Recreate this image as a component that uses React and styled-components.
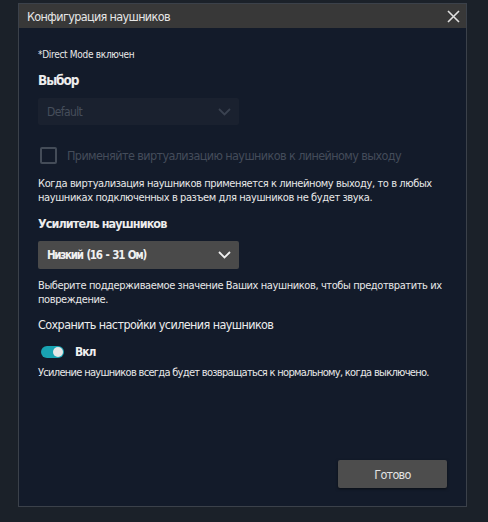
import styled, { createGlobalStyle } from "styled-components";

const GlobalStyle = createGlobalStyle`
  body {
    margin: 0;
    background: #1b2129;
    font-family: "DejaVu Sans Condensed", "Liberation Sans", sans-serif;
  }
`

const Dialog = styled.div`
  box-sizing: border-box;
  width: 449px;
  height: 504px;
  margin: 3px 0 0 18px;
  border: 1px solid #3b414a;
  background: #131b2a;
  display: flex;
  flex-direction: column;
`

const Header = styled.div`
  height: 24px;
  background: #383838;
  display: flex;
  align-items: center;
  justify-content: space-between;
  padding: 0 5px 0 8px;
  color: #e6e6e6;
  font-size: 12.5px;
  letter-spacing: -0.65px;
`

const Close = styled.button`
  background: none;
  border: none;
  padding: 0;
  width: 16px;
  height: 16px;
  display: flex;
  align-items: center;
  justify-content: center;
  cursor: pointer;
`

const Body = styled.div`
  flex: 1;
  display: flex;
  flex-direction: column;
  padding: 0 19px 18px 19px;
`

const Note = styled.div`
  margin-top: ${(p) => p.mt}px;
  margin-right: -10px;
  font-size: ${(p) => p.size || 11}px;
  letter-spacing: ${(p) => p.ls ?? -0.4}px;
  line-height: 14px;
  color: #e8e8e8;
`

const Title = styled.div`
  margin-top: ${(p) => p.mt}px;
  font-size: ${(p) => p.size}px;
  letter-spacing: ${(p) => p.ls}px;
  line-height: 18px;
  font-weight: ${(p) => (p.bold ? 700 : 400)};
  color: #ececec;
`

const Select = styled.div`
  margin-top: ${(p) => p.mt}px;
  width: 201px;
  height: ${(p) => p.h}px;
  box-sizing: border-box;
  display: flex;
  align-items: center;
  justify-content: space-between;
  padding: 0 8px 0 9px;
  border-radius: 2px;
  background: ${(p) => (p.disabled ? '#1a212f' : '#4a4a4a')};
  color: ${(p) => (p.disabled ? '#464e5b' : '#f0f0f0')};
  font-size: ${(p) => (p.disabled ? 12 : 11.5)}px;
  letter-spacing: ${(p) => (p.disabled ? -0.6 : -1.3)}px;
  word-spacing: ${(p) => (p.disabled ? 0 : 1.5)}px;
  font-weight: ${(p) => (p.disabled ? 400 : 700)};
`

const CheckRow = styled.label`
  margin-top: 21px;
  display: flex;
  align-items: center;
  gap: 10px;
  height: 18px;
  padding-left: 2px;
  color: #444c5a;
  font-size: 12.5px;
  letter-spacing: -0.6px;
`

const Box = styled.span`
  width: 13px;
  height: 13px;
  border: 2px solid #444c58;
  border-radius: 2px;
`

const ToggleRow = styled.div`
  margin-top: 11px;
  display: flex;
  align-items: center;
  gap: 11px;
  height: 14px;
  padding-left: 3px;
  color: #f0f0f0;
  font-size: 12px;
  letter-spacing: -1px;
  font-weight: 700;
`

const Track = styled.span`
  width: 23px;
  height: 12px;
  border-radius: 6px;
  background: #19a3b2;
  position: relative;
`

const Knob = styled.span`
  position: absolute;
  right: 1px;
  top: 1px;
  width: 10px;
  height: 10px;
  border-radius: 50%;
  background: #e6e6e6;
`

const Footer = styled.div`
  margin-top: auto;
  display: flex;
  justify-content: flex-end;
`

const Button = styled.button`
  width: 109px;
  height: 28px;
  border: none;
  border-radius: 2px;
  background: #4d4d4d;
  color: #e2e2e2;
  font-family: inherit;
  font-size: 12.5px;
  letter-spacing: -0.7px;
  box-shadow: 0 1px 3px rgba(0, 0, 0, 0.5);
`

const Chevron = ({ color }) => (
  <svg width="13" height="8" viewBox="0 0 13 8">
    <path d="M1 1l5.5 5.5L12 1" fill="none" stroke={color} strokeWidth="1.8" />
  </svg>
)

export default function App() {
  return (
    <>
      <GlobalStyle />
      <Dialog>
        <Header>
          Конфигурация наушников
          <Close>
            <svg width="13" height="13" viewBox="0 0 13 13">
              <path d="M1 1l11 11M12 1L1 12" stroke="#e0e0e0" strokeWidth="1.6" />
            </svg>
          </Close>
        </Header>
        <Body>
          <Note mt={20} size={10} ls={-0.3}>*Direct Mode включен</Note>
          <Title mt={9} size={13.5} ls={-1.1} bold>Выбор</Title>
          <Select mt={9} h={27} disabled>
            Default
            <Chevron color="#3a4250" />
          </Select>
          <CheckRow>
            <Box />
            Применяйте виртуализацию наушников к линейному выходу
          </CheckRow>
          <Note mt={13}>
            Когда виртуализация наушников применяется к линейному выходу, то в любых
            <br />
            наушниках подключенных в разъем для наушников не будет звука.
          </Note>
          <Title mt={10} size={12.5} ls={-0.9} bold>Усилитель наушников</Title>
          <Select mt={8} h={28}>
            Низкий (16 - 31 Ом)
            <Chevron color="#f0f0f0" />
          </Select>
          <Note mt={10}>
            Выберите поддерживаемое значение Ваших наушников, чтобы предотвратить их
            <br />
            повреждение.
          </Note>
          <Title mt={9} size={12.5} ls={-0.6}>Сохранить настройки усиления наушников</Title>
          <ToggleRow>
            <Track>
              <Knob />
            </Track>
            Вкл
          </ToggleRow>
          <Note mt={7} ls={-0.7}>
            Усиление наушников всегда будет возвращаться к нормальному, когда выключено.
          </Note>
          <Footer>
            <Button>Готово</Button>
          </Footer>
        </Body>
      </Dialog>
    </>
  )
}
